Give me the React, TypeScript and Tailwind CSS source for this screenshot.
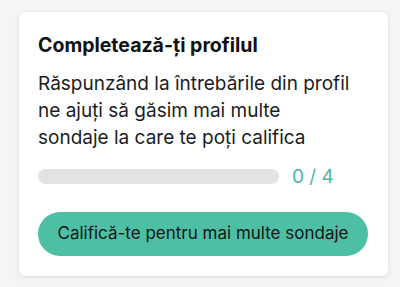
export default function App() {
  const answered = 0;
  const total = 4;

  return (
    <div
      className="min-h-screen bg-[#f5f5f5] pt-[12px] pl-[19px] pr-[12px]"
      style={{ fontFamily: 'Inter, "Noto Sans", sans-serif' }}
    >
      {/* Profile completion card */}
      <div className="w-[369px] rounded-[6px] bg-white px-[19px] pt-[20px] pb-[20px] shadow-[0_1px_4px_rgba(0,0,0,0.12)]">
        <h2 className="text-[19.5px] leading-[27px] font-bold text-[#111111]">
          Completează-ți profilul
        </h2>
        <p className="mt-[11px] text-[19px] leading-[27px] text-[#1c1c1c]">
          Răspunzând la întrebările din profil ne ajuți să găsim mai multe
          <br />
          sondaje la care te poți califica
        </p>

        <div className="mt-[12px] flex items-center gap-[13px]">
          <div className="h-[15px] w-[241px] rounded-full bg-[#e3e3e3]">
            <div
              className="h-full rounded-full bg-[#4cbfa5]"
              style={{ width: `${(answered / total) * 100}%` }}
            />
          </div>
          <span className="text-[19px] leading-[27px] text-[#4cb89b]">
            {answered} / {total}
          </span>
        </div>

        <button
          type="button"
          className="mt-[22px] h-[44px] w-[330px] rounded-full bg-[#4cbfa5] text-[17px] text-[#151515]"
        >
          Califică-te pentru mai multe sondaje
        </button>
      </div>
    </div>
  );
}
